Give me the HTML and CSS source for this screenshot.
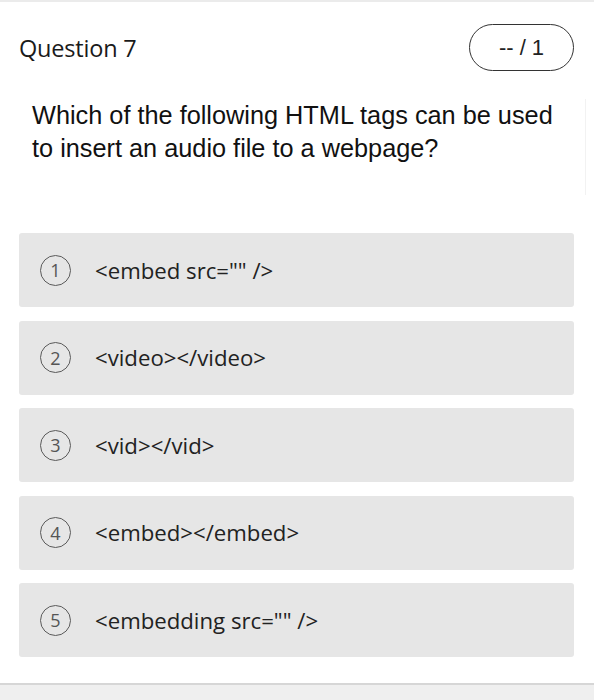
FILE: index.html
```html
<!DOCTYPE html>
<html>
<head>
<meta charset="utf-8">
<link rel="stylesheet" href="styles.css">
</head>
<body>
<div class="page">
  <div class="card">
    <div class="header">
      <h2 class="title">Question 7</h2>
      <div class="score">-- / 1</div>
    </div>
    <p class="prompt">Which of the following HTML tags can be used to insert an audio file to a webpage?</p>
    <div class="options">
      <div class="option"><span class="num">1</span><span class="label">&lt;embed src="" /&gt;</span></div>
      <div class="option"><span class="num">2</span><span class="label">&lt;video&gt;&lt;/video&gt;</span></div>
      <div class="option"><span class="num">3</span><span class="label">&lt;vid&gt;&lt;/vid&gt;</span></div>
      <div class="option"><span class="num">4</span><span class="label">&lt;embed&gt;&lt;/embed&gt;</span></div>
      <div class="option"><span class="num">5</span><span class="label">&lt;embedding src="" /&gt;</span></div>
    </div>
  </div>
  <div class="footer"></div>
</div>
</body>
</html>
```
FILE: styles.css
```css
html, body {
  margin: 0;
  padding: 0;
  background: #fff;
}
.page {
  width: 594px;
  height: 700px;
  display: flex;
  flex-direction: column;
  overflow: hidden;
}
.card {
  border-top: 2px solid #ebebeb;
  padding: 0 20px 0 19px;
  height: 683px;
  box-sizing: border-box;
}
.header {
  display: flex;
  align-items: center;
  justify-content: space-between;
  padding-top: 22px;
  height: 47px;
}
.title {
  margin: 0;
  font-family: "Open Sans", sans-serif;
  font-weight: 500;
  font-size: 23.5px;
  letter-spacing: -0.2px;
  color: #1a1a1a;
}
.score {
  box-sizing: border-box;
  width: 105px;
  height: 47px;
  border: 1.5px solid #333;
  border-radius: 24px;
  display: flex;
  align-items: center;
  justify-content: center;
  font-family: "Liberation Sans", Arial, sans-serif;
  font-size: 22px;
  color: #222;
}
.prompt {
  margin: 28px -12px 38px 13px;
  padding-right: 11px;
  border-right: 1px solid #f2f2f2;
  font-family: "Liberation Sans", Arial, sans-serif;
  font-size: 25.3px;
  line-height: 33px;
  color: #111;
  height: 96px;
}
.options {
  display: flex;
  flex-direction: column;
  gap: 13.5px;
}
.option {
  height: 74px;
  background: #e6e6e6;
  border-radius: 3px;
  display: flex;
  align-items: center;
  padding-left: 21px;
}
.num {
  box-sizing: border-box;
  width: 31px;
  height: 31px;
  border: 1.6px solid #5a5a5a;
  border-radius: 50%;
  display: flex;
  align-items: center;
  justify-content: center;
  font-family: "Open Sans", sans-serif;
  font-size: 18px;
  color: #555;
  margin-right: 24px;
}
.label {
  font-family: "Open Sans", sans-serif;
  font-size: 22.2px;
  color: #222;
}
.footer {
  flex: 1;
  border-top: 2px solid #d6d6d6;
  background: #efefef;
}
```
